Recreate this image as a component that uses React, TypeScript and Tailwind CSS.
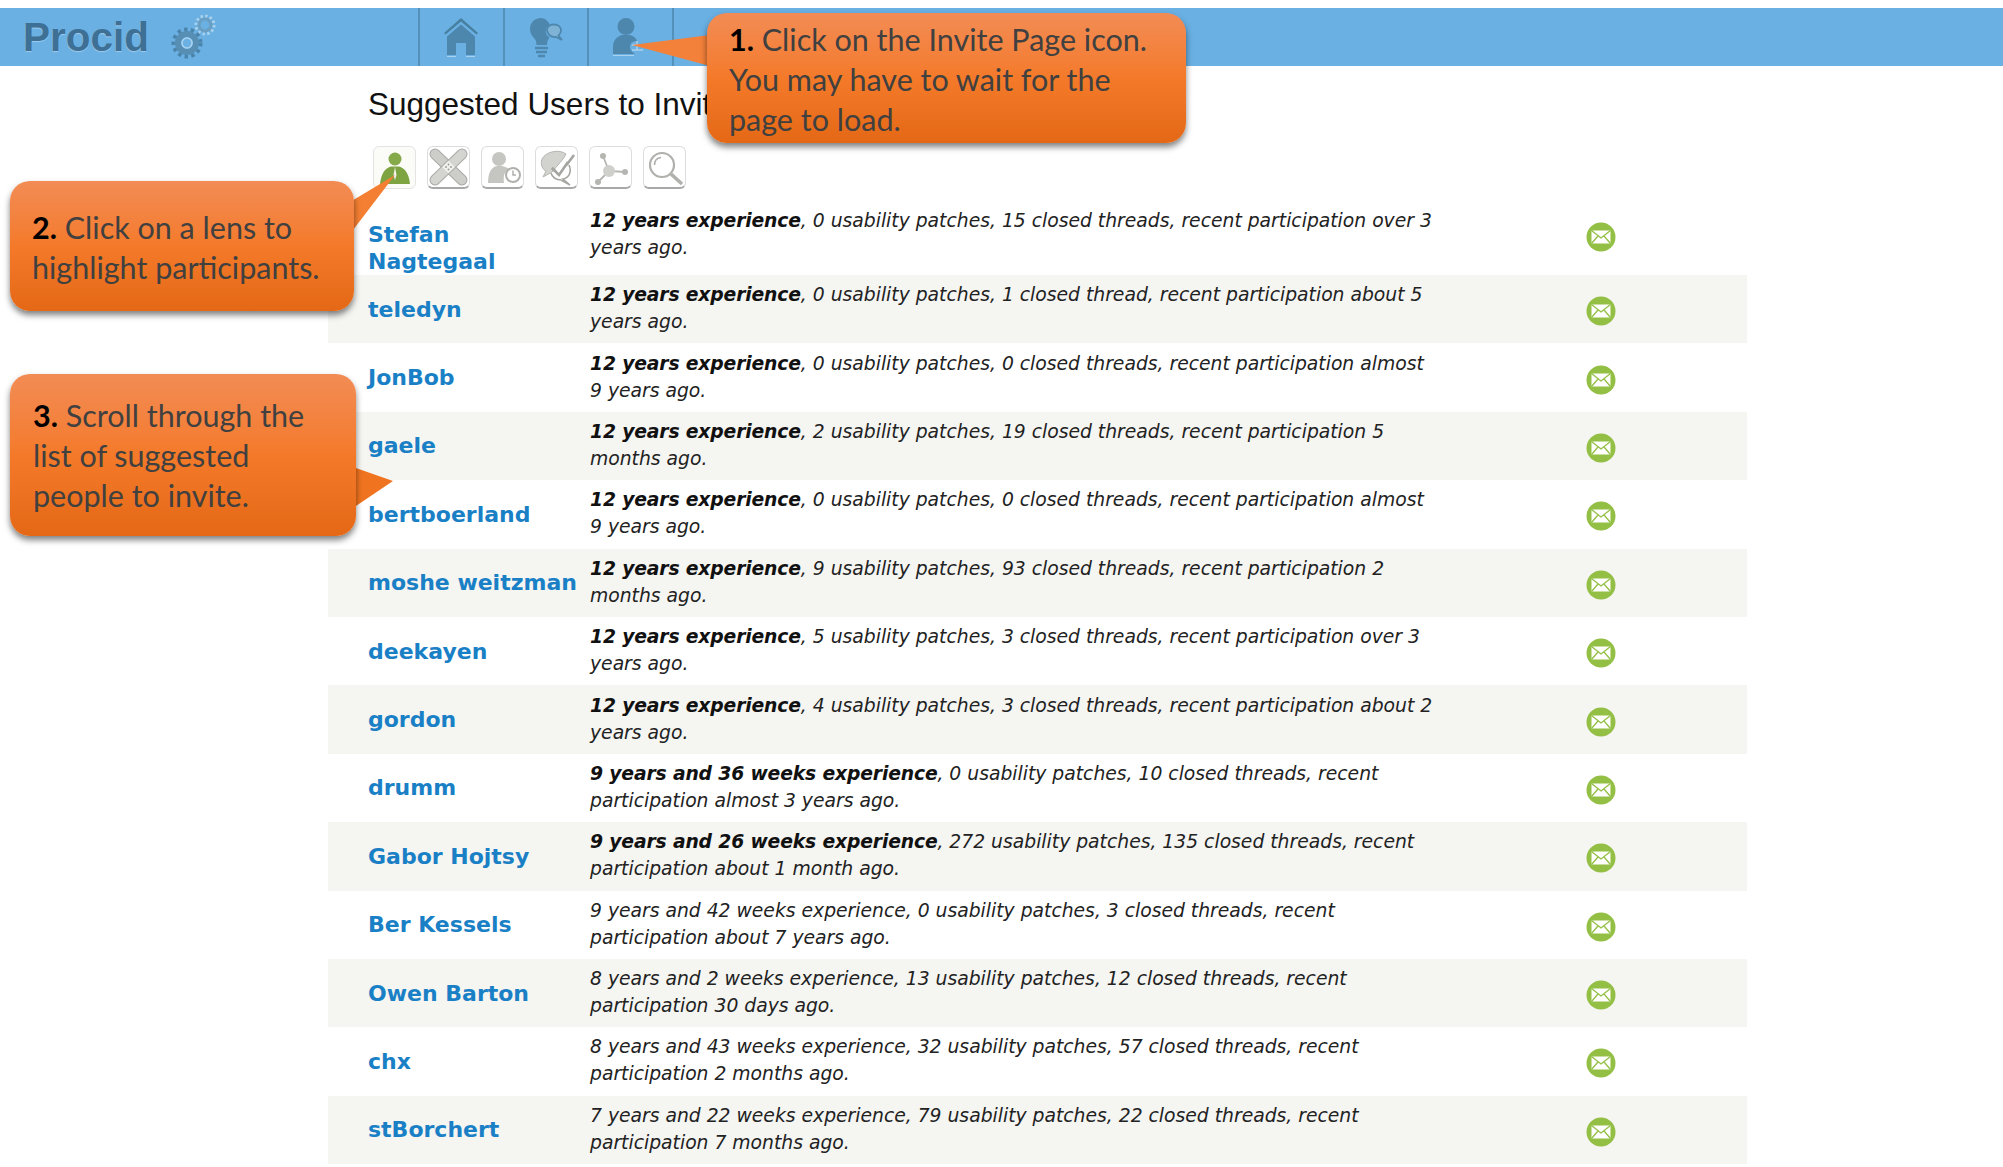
import type { ReactNode } from "react";

type Participant = {
  name: string;
  exp: string;
  strong: boolean;
  rest: string;
};

const people: Participant[] = [
  { name: "Stefan Nagtegaal", exp: "12 years experience", strong: true, rest: ", 0 usability patches, 15 closed threads, recent participation over 3 years ago." },
  { name: "teledyn", exp: "12 years experience", strong: true, rest: ", 0 usability patches, 1 closed thread, recent participation about 5 years ago." },
  { name: "JonBob", exp: "12 years experience", strong: true, rest: ", 0 usability patches, 0 closed threads, recent participation almost 9 years ago." },
  { name: "gaele", exp: "12 years experience", strong: true, rest: ", 2 usability patches, 19 closed threads, recent participation 5 months ago." },
  { name: "bertboerland", exp: "12 years experience", strong: true, rest: ", 0 usability patches, 0 closed threads, recent participation almost 9 years ago." },
  { name: "moshe weitzman", exp: "12 years experience", strong: true, rest: ", 9 usability patches, 93 closed threads, recent participation 2 months ago." },
  { name: "deekayen", exp: "12 years experience", strong: true, rest: ", 5 usability patches, 3 closed threads, recent participation over 3 years ago." },
  { name: "gordon", exp: "12 years experience", strong: true, rest: ", 4 usability patches, 3 closed threads, recent participation about 2 years ago." },
  { name: "drumm", exp: "9 years and 36 weeks experience", strong: true, rest: ", 0 usability patches, 10 closed threads, recent participation almost 3 years ago." },
  { name: "Gabor Hojtsy", exp: "9 years and 26 weeks experience", strong: true, rest: ", 272 usability patches, 135 closed threads, recent participation about 1 month ago." },
  { name: "Ber Kessels", exp: "9 years and 42 weeks experience", strong: false, rest: ", 0 usability patches, 3 closed threads, recent participation about 7 years ago." },
  { name: "Owen Barton", exp: "8 years and 2 weeks experience", strong: false, rest: ", 13 usability patches, 12 closed threads, recent participation 30 days ago." },
  { name: "chx", exp: "8 years and 43 weeks experience", strong: false, rest: ", 32 usability patches, 57 closed threads, recent participation 2 months ago." },
  { name: "stBorchert", exp: "7 years and 22 weeks experience", strong: false, rest: ", 79 usability patches, 22 closed threads, recent participation 7 months ago." },
];

function NavCell({ children }: { children: ReactNode }) {
  return (
    <div className="flex h-full w-[84.5px] items-center justify-center border-l-2 border-[#5390ba]">
      {children}
    </div>
  );
}

function Gears() {
  return (
    <svg width="50" height="50" viewBox="0 0 50 50" fill="none">
      <circle cx="35" cy="13" r="9" stroke="#a9d2ee" strokeWidth="3" strokeDasharray="2.4 2.3" />
      <circle cx="35" cy="13" r="6" stroke="#6a9fc4" strokeWidth="3.2" />
      <circle cx="17" cy="31" r="13.5" stroke="#4a84ab" strokeWidth="4" strokeDasharray="3.4 3.3" />
      <circle cx="17" cy="31" r="9" stroke="#568eb4" strokeWidth="6" />
      <circle cx="17" cy="31" r="5" stroke="#a9d2ee" strokeWidth="1.6" />
    </svg>
  );
}

function HomeIcon() {
  return (
    <svg width="36" height="40" viewBox="0 0 36 40">
      <path d="M18 1 L1 16 L2.5 17.5 L18 4.5 L33.5 17.5 L35 16 Z" fill="#47809f" />
      <path d="M18 7.5 L4 19.5 V38 H13 V26 H23 V38 H32 V19.5 Z" fill="#4e87ad" />
      <path d="M4 39.5 H13 M23 39.5 H32" stroke="#a9d2ee" strokeWidth="1" />
    </svg>
  );
}

function BulbIcon() {
  return (
    <svg width="34" height="41" viewBox="0 0 34 41">
      <path d="M12 1 C5 1 1 6 1 12 C1 18 5 20 7 24 L7.5 28 H18 L18.5 24 C19.5 22 20 21.5 20.5 20.5 C16 18 15 11 21 8 C19 4 16 1 12 1 Z" fill="#4e87ad" />
      <path d="M18 13 C18 9 22 7.5 25 7.5 C29 7.5 32 10 32 13.5 C32 16 31 17 29.5 18.5 L33 23 L27 20 C22 20.5 18 17 18 13 Z" fill="#7fb3d6" stroke="#4e87ad" strokeWidth="1.8" />
      <path d="M6 31 H19 M7 35 H18 M9 39 H16" stroke="#4e87ad" strokeWidth="2.4" />
    </svg>
  );
}

function InviteIcon() {
  return (
    <svg width="36" height="40" viewBox="0 0 36 40">
      <circle cx="14" cy="9.5" r="8.5" fill="#4e87ad" />
      <path d="M1 37 V30 C1 24 4 20 10 18 L18 18 C22 19 24 21 25 24 C21 24 18 26 18 30 C18 33 20 35 23 37 Z" fill="#4e87ad" />
      <path d="M25 24 V33 M20 28 H31 M20 33 H31" stroke="#a9d2ee" strokeWidth="1.5" />
      <path d="M1 38.5 H22" stroke="#a9d2ee" strokeWidth="1" />
    </svg>
  );
}

function LensButton({ children, active }: { children: ReactNode; active?: boolean }) {
  return (
    <div
      className={
        active
          ? "size-[43px] overflow-hidden rounded-[6px] border border-[#e4e4e4] bg-[#fbfbf8]"
          : "size-[43px] overflow-hidden rounded-[6px] border border-[#dcdcdc] border-b-2 border-b-[#a8a8a8] bg-white"
      }
    >
      {children}
    </div>
  );
}

function Toolbar() {
  return (
    <div className="flex gap-[11px]">
      <LensButton active>
        <svg width="41" height="41" viewBox="0 0 41 41">
          <circle cx="21" cy="12" r="6.5" fill="#86a94a" />
          <path d="M6 37 C7 27 11 21 17 19.5 H25 C31 21 35 27 36 37 Z" fill="#7ea341" />
          <path d="M21 20 L19.5 28 L21 33 L22.5 28 Z" fill="#f4f4ee" />
        </svg>
      </LensButton>
      <LensButton>
        <svg width="41" height="41" viewBox="0 0 41 41" fill="none" strokeLinecap="round">
          <path d="M7 7 L34 33" stroke="#a9a9a5" strokeWidth="11" />
          <path d="M7 7 L34 33" stroke="#cdcdc9" strokeWidth="9" />
          <path d="M34 7 L7 33" stroke="#a9a9a5" strokeWidth="11" />
          <path d="M34 7 L7 33" stroke="#d4d4d0" strokeWidth="9" />
          <rect x="16" y="15.5" width="9" height="9" transform="rotate(45 20.5 20)" fill="#f0f0ed" />
          <circle cx="20.5" cy="17.5" r="0.9" fill="#999" />
          <circle cx="20.5" cy="22.5" r="0.9" fill="#999" />
          <circle cx="18" cy="20" r="0.9" fill="#999" />
          <circle cx="23" cy="20" r="0.9" fill="#999" />
        </svg>
      </LensButton>
      <LensButton>
        <svg width="41" height="41" viewBox="0 0 41 41">
          <circle cx="17" cy="12" r="7" fill="#c5c5c1" />
          <path d="M6 36 C6 26 9 20 15 19 H20 C24 20 26 21 27 22 C23 24 21 28 22 36 Z" fill="#c5c5c1" />
          <circle cx="31" cy="28" r="7" fill="#fff" stroke="#b0b0ac" strokeWidth="2" />
          <path d="M31 23.5 V28 H34" fill="none" stroke="#b0b0ac" strokeWidth="1.5" />
        </svg>
      </LensButton>
      <LensButton>
        <svg width="41" height="41" viewBox="0 0 41 41">
          <path d="M30 7 C24 2 10 4 6 12 C4 18 7 23 10 24 L7 30 L16 25 L27 12 Z" fill="#d2d2ce" stroke="#b5b5b1" strokeWidth="1" />
          <path d="M16 21 L23 28 L38 8" fill="none" stroke="#a5a5a1" strokeWidth="2.6" />
          <path d="M33 18 C36 25 33 31 27 32 L34 38 L25 33 C20 33 16 30 15 26" fill="#fff" stroke="#a5a5a1" strokeWidth="1.6" />
          <path d="M16 21 L23 28 L32 15" fill="none" stroke="#a5a5a1" strokeWidth="2.6" />
        </svg>
      </LensButton>
      <LensButton>
        <svg width="41" height="41" viewBox="0 0 41 41" fill="#b5b5b1">
          <path d="M13 9 L19 24 L35 25 M19 24 L8 35" fill="none" stroke="#b5b5b1" strokeWidth="1.8" />
          <circle cx="19" cy="24" r="6" fill="#cfcfcb" />
          <circle cx="13" cy="9" r="3" />
          <circle cx="35" cy="25" r="3" />
          <circle cx="8" cy="35" r="3" />
        </svg>
      </LensButton>
      <LensButton>
        <svg width="41" height="41" viewBox="0 0 41 41" fill="none" stroke="#b0b0ac">
          <circle cx="18" cy="18" r="12" strokeWidth="2.2" />
          <path d="M10.5 18 C10.5 14 13 11 17 10.5" strokeWidth="1.6" />
          <path d="M27 27 L38 37" strokeWidth="3.6" />
        </svg>
      </LensButton>
    </div>
  );
}

function MailIcon() {
  return (
    <svg width="30" height="30" viewBox="0 0 30 30">
      <circle cx="15" cy="15" r="14.5" fill="#93bf44" />
      <rect x="5.5" y="8.5" width="19" height="13" fill="#fff" />
      <path d="M5.5 8.5 L15 16 L24.5 8.5 M5.5 21.5 L12 14 M24.5 21.5 L18 14" fill="none" stroke="#93bf44" strokeWidth="1.3" />
    </svg>
  );
}

function Row({ person, index }: { person: Participant; index: number }) {
  const first = index === 0;
  return (
    <div
      className={
        first
          ? "flex h-[73px] items-start bg-white"
          : index % 2 === 1
            ? "flex h-[68.4px] items-center bg-[#f5f5f2]"
            : "flex h-[68.4px] items-center bg-white"
      }
    >
      <div
        className={
          first
            ? "w-[262px] shrink-0 pl-10 pr-3 pt-[19px] font-['DejaVu_Sans',sans-serif] text-[22px] font-bold leading-[27px] text-[#1a80c6]"
            : "w-[262px] shrink-0 pl-10 font-['DejaVu_Sans',sans-serif] text-[22px] font-bold leading-[27px] text-[#1a80c6]"
        }
      >
        {person.name}
      </div>
      <div
        className={
          first
            ? "w-[846px] shrink-0 pt-[5px] font-['DejaVu_Sans',sans-serif] text-[18.75px] italic leading-[27px] text-[#222]"
            : "w-[846px] shrink-0 pb-[2px] font-['DejaVu_Sans',sans-serif] text-[18.75px] italic leading-[27px] text-[#222]"
        }
      >
        {person.strong ? (
          <strong className="font-bold tracking-[-0.15px] text-[#111]">{person.exp}</strong>
        ) : (
          person.exp
        )}
        {person.rest}
      </div>
      <div className={first ? "ml-[150px] pt-[20px]" : "ml-[150px] pt-[4px]"}>
        <MailIcon />
      </div>
    </div>
  );
}

const calloutFace =
  "absolute rounded-[20px] bg-gradient-to-b from-[#f28c54] via-[#f47a29] to-[#e46815] font-['Lato',sans-serif] text-[30.5px] leading-[40px] text-[#404040] shadow-[0_4px_6px_rgba(0,0,0,0.5)]";

function Callouts() {
  return (
    <>
      <svg className="absolute left-[625px] top-[30px]" width="90" height="45" viewBox="0 0 90 45">
        <path d="M7 15 L85 5 V36 Z" fill="#f4813a" />
      </svg>
      <div className={`${calloutFace} left-[707px] top-[13px] h-[130px] w-[479px] pl-[22px] pt-[6px]`}>
        <b className="text-black">1.</b> Click on the Invite Page icon.
        <br />
        You may have to wait for the
        <br />
        page to load.
      </div>

      <svg className="absolute left-[345px] top-[170px]" width="55" height="75" viewBox="0 0 55 75">
        <path d="M50 5 L5 32 V64 Z" fill="#f47f33" />
      </svg>
      <div className={`${calloutFace} left-[10px] top-[181px] h-[130px] w-[344px] pl-[22px] pt-[26px]`}>
        <b className="text-black">2.</b> Click on a lens to
        <br />
        highlight participants.
      </div>

      <svg className="absolute left-[350px] top-[460px]" width="50" height="55" viewBox="0 0 50 55">
        <path d="M43 21 L3 7 V48 Z" fill="#f0741f" />
      </svg>
      <div className={`${calloutFace} left-[10px] top-[374px] h-[162px] w-[346px] pl-[23px] pt-[21px]`}>
        <b className="text-black">3.</b> Scroll through the
        <br />
        list of suggested
        <br />
        people to invite.
      </div>
    </>
  );
}

export default function App() {
  return (
    <div className="relative min-h-[1167px] bg-white pt-2">
      <header className="flex h-[58px] items-center bg-[#6ab0e3]">
        <div className="flex w-[418px] shrink-0 items-center pl-[23px]">
          <span className="font-['Liberation_Sans',sans-serif] text-[40.5px] font-bold leading-none text-[#3e6f94] [text-shadow:0_1px_1px_rgba(255,255,255,0.35)]">
            Procid
          </span>
          <span className="ml-[21px]">
            <Gears />
          </span>
        </div>
        <NavCell>
          <HomeIcon />
        </NavCell>
        <NavCell>
          <BulbIcon />
        </NavCell>
        <NavCell>
          <InviteIcon />
        </NavCell>
        <div className="h-full border-l-2 border-[#5390ba]" />
      </header>

      <main className="ml-[328px] w-[1419px]">
        <h1 className="mb-[22px] mt-[18px] pl-10 font-['Liberation_Sans',sans-serif] text-[31.5px] leading-10 text-[#111]">
          Suggested Users to Invite
        </h1>
        <div className="pl-[45px]">
          <Toolbar />
        </div>
        <div className="mt-[13px]">
          {people.map((person, i) => (
            <Row key={person.name} person={person} index={i} />
          ))}
        </div>
      </main>

      <Callouts />
    </div>
  );
}
